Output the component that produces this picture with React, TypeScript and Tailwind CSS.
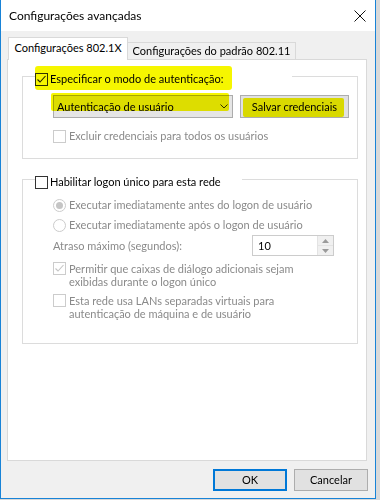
import React from "react";

const font = "font-['Lato','Noto_Sans',sans-serif]";

const Check = ({ checked = false, disabled = false }: { checked?: boolean; disabled?: boolean }) => (
  <span
    className={`flex w-[13px] h-[13px] shrink-0 items-center justify-center border bg-white ${
      disabled ? "border-[#cccccc]" : "border-[#333333]"
    }`}
  >
    {checked && (
      <svg width="11" height="11" viewBox="0 0 11 11">
        <path d="M1.5 5.5 L4 8 L9.5 2" fill="none" stroke={disabled ? "#c4c4c4" : "#222"} strokeWidth="1.1" />
      </svg>
    )}
  </span>
);

const Radio = ({ selected = false }: { selected?: boolean }) => (
  <span className="flex w-[13px] h-[13px] shrink-0 items-center justify-center rounded-full border border-[#cccccc] bg-white">
    {selected && <span className="w-[7px] h-[7px] rounded-full bg-[#c5c5c5]" />}
  </span>
);

const Highlight = ({ className }: { className: string }) => (
  <span className={`absolute bg-[#f6f600] mix-blend-multiply pointer-events-none ${className}`} />
);

export default function App() {
  return (
    <div className={`w-[380px] h-[500px] bg-[#d9d9d9] text-[11px] leading-[16px] text-black ${font}`}>
      <div className="w-[376px] h-[499px] flex flex-col border-x border-b border-[#1883d7] bg-[#f0f0f0]">
        {/* Title bar */}
        <div className="h-[31px] shrink-0 flex items-center justify-between bg-white pl-[8px] pr-[9px]">
          <p className="text-[12px] leading-[16px]">Configurações avançadas</p>
          <svg width="12" height="12" viewBox="0 0 12 12">
            <path d="M0.5 0.5 L11.5 11.5 M11.5 0.5 L0.5 11.5" stroke="#111" strokeWidth="1" />
          </svg>
        </div>

        {/* Tabs + panel */}
        <div className="flex flex-col pl-[6px] pt-[6px]">
          <div className="flex h-[22px] items-end pl-[1px] whitespace-nowrap">
            <div className="relative z-10 h-[23px] -mb-px w-[120px] flex items-center justify-center border-x border-t border-[#d9d9d9] bg-white pb-[2px]">
              Configurações 802.1X
            </div>
            <div className="h-[17px] w-[168px] flex items-center justify-center border-r border-t border-[#d9d9d9] bg-[#f0f0f0]">
              Configurações do padrão 802.11
            </div>
          </div>

          <div className="relative w-[360px] h-[402px] border border-[#d9d9d9] bg-white pl-[14px] pr-[8px] pt-[5px]">
            <Highlight className="left-[27px] top-[6px] w-[197px] h-[24px] rounded-[3px]" />
            <Highlight className="left-[43px] top-[33px] w-[178px] h-[18px] rounded-[2px]" />
            <Highlight className="left-[235px] top-[38px] w-[101px] h-[19px] rounded-[2px]" />

            {/* Group 1 */}
            <fieldset className="w-[336px] h-[94px] border border-[#dcdcdc]">
              <legend className="ml-[12px] w-[257px] h-[22px] pt-[6px]">
                <span className="flex items-center gap-[2px]">
                  <Check checked />
                  <span>Especificar o modo de autenticação:</span>
                </span>
              </legend>
              <div className="flex flex-col pl-[30px] pt-[8px]">
                <div className="flex gap-[7px]">
                  <div className="w-[180px] h-[23px] flex items-center justify-between border border-[#acacac] bg-[#e5e5e5] pl-[3px] pr-[4px]">
                    <span>Autenticação de usuário</span>
                    <svg width="8" height="5" viewBox="0 0 8 5">
                      <path d="M0.5 0.5 L4 4 L7.5 0.5" fill="none" stroke="#333" strokeWidth="1" />
                    </svg>
                  </div>
                  <button className="w-[109px] h-[23px] border border-[#adadad] bg-[#e1e1e1]">Salvar credenciais</button>
                </div>
                <div className="mt-[10px] flex items-center gap-[3px] text-[#8a8a8a]">
                  <Check disabled />
                  <span>Excluir credenciais para todos os usuários</span>
                </div>
              </div>
            </fieldset>

            {/* Group 2 */}
            <fieldset className="mt-[9px] w-[336px] h-[176px] border border-[#dcdcdc]">
              <legend className="ml-[12px] w-[207px] h-[22px] pt-[6px]">
                <span className="flex items-center gap-[2px]">
                  <Check />
                  <span>Habilitar logon único para esta rede</span>
                </span>
              </legend>
              <div className="flex flex-col pl-[30px] pt-[7px] text-[#8a8a8a]">
                <div className="flex items-center gap-[3px]">
                  <Radio selected />
                  <span>Executar imediatamente antes do logon de usuário</span>
                </div>
                <div className="mt-[4px] flex items-center gap-[3px]">
                  <Radio />
                  <span>Executar imediatamente após o logon de usuário</span>
                </div>
                <div className="mt-[2px] flex items-center">
                  <span className="w-[199px]">Atraso máximo (segundos):</span>
                  <div className="w-[82px] h-[21px] flex border border-[#cccccc] bg-white">
                    <span className="flex-1 flex items-center pl-[5px] text-black">10</span>
                    <div className="w-[16px] flex flex-col border-l border-[#e3e3e3] bg-[#f0f0f0]">
                      <span className="flex-1 flex items-center justify-center border-b border-[#e3e3e3]">
                        <svg width="7" height="4" viewBox="0 0 7 4"><path d="M3.5 0 L7 4 L0 4 Z" fill="#9a9a9a" /></svg>
                      </span>
                      <span className="flex-1 flex items-center justify-center">
                        <svg width="7" height="4" viewBox="0 0 7 4"><path d="M0 0 L7 0 L3.5 4 Z" fill="#9a9a9a" /></svg>
                      </span>
                    </div>
                  </div>
                </div>
                <div className="mt-[6px] flex items-start gap-[3px] leading-[13px]">
                  <Check checked disabled />
                  <span>
                    Permitir que caixas de diálogo adicionais sejam
                    <br />
                    exibidas durante o logon único
                  </span>
                </div>
                <div className="mt-[6px] flex items-start gap-[3px] leading-[13px]">
                  <Check disabled />
                  <span>
                    Esta rede usa LANs separadas virtuais para
                    <br />
                    autenticação de máquina e de usuário
                  </span>
                </div>
              </div>
            </fieldset>
          </div>
        </div>

        {/* Footer buttons */}
        <div className="mt-[8px] flex justify-end gap-[7px] pr-[7px]">
          <button className="w-[74px] h-[22px] border-2 border-[#0078d7] bg-[#e1e1e1]">OK</button>
          <button className="w-[74px] h-[22px] border border-[#adadad] bg-[#e1e1e1]">Cancelar</button>
        </div>
      </div>
    </div>
  );
}
